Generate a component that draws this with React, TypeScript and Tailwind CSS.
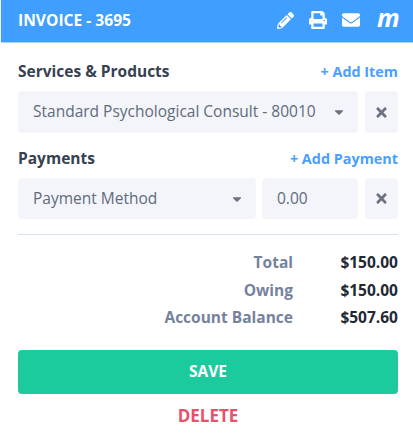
import { FaPencilAlt, FaPrint, FaEnvelope, FaTimes, FaCaretDown } from 'react-icons/fa';

const font = { fontFamily: '"Open Sans", sans-serif' };

function RemoveButton() {
  return (
    <button className="w-[33px] h-full shrink-0 bg-[#f3f5fa] rounded-[4px] flex items-center justify-center text-[#6b7280]">
      <FaTimes className="w-[15px] h-[15px]" />
    </button>
  );
}

function Select({ label, className }: { label: string; className: string }) {
  return (
    <div className={`${className} h-full bg-[#f3f5fa] rounded-[4px] flex items-center justify-between pl-[15px] pr-[12px] text-[15.5px] text-[#5f6b7c]`}>
      <span>{label}</span>
      <FaCaretDown className="w-[14px] h-[14px] text-[#6b7280]" />
    </div>
  );
}

function TotalRow({ label, value }: { label: string; value: string }) {
  return (
    <div className="flex justify-end items-center h-[27.5px] text-[15.5px] font-bold">
      <span className="text-[#76829b]">{label}</span>
      <span className="w-[105px] text-right text-[#1f2933]">{value}</span>
    </div>
  );
}

export default function App() {
  return (
    <div className="w-[413px] h-[438px] bg-white overflow-hidden" style={font}>
      <div className="ml-px h-[43px] bg-[#409eff] border-b border-[#a8d4fb] flex items-center justify-between pl-[17px] pr-[15px] text-white">
        <h1 className="text-[15.6px] font-bold">INVOICE - 3695</h1>
        <div className="flex items-center">
          <FaPencilAlt className="w-[17px] h-[17px] -mt-[2px]" />
          <FaPrint className="w-[18px] h-[18px] ml-[15px] -mt-[2px]" />
          <FaEnvelope className="w-[18px] h-[18px] ml-[15px] -mt-[2px]" />
          <span className="ml-[17px] w-[21px] text-[25px] leading-[20px] font-bold italic -mt-[8px]">m</span>
        </div>
      </div>

      <div className="pl-[18px] pr-[15px]">
        <div className="flex items-center justify-between mt-[18px] h-[22px]">
          <h2 className="text-[15.5px] font-bold text-[#364152]">Services &amp; Products</h2>
          <a className="text-[14.4px] font-bold text-[#4a9fff]">+ Add Item</a>
        </div>
        <div className="flex gap-[7px] h-[42px] mt-[8px]">
          <Select label="Standard Psychological Consult - 80010" className="flex-1" />
          <RemoveButton />
        </div>

        <div className="flex items-center justify-between mt-[15px] h-[22px]">
          <h2 className="text-[15.5px] font-bold text-[#364152]">Payments</h2>
          <a className="text-[14.4px] font-bold text-[#4a9fff]">+ Add Payment</a>
        </div>
        <div className="flex h-[41px] mt-[8px]">
          <Select label="Payment Method" className="w-[238px]" />
          <div className="w-[96px] ml-[6px] bg-[#f3f5fa] rounded-[4px] flex items-center pl-[15px] text-[15.5px] text-[#5f6b7c]">0.00</div>
          <div className="ml-[7px] h-full"><RemoveButton /></div>
        </div>

        <div className="mt-[15px] border-t border-[#d5e2ef]" />

        <div className="mt-[14px]">
          <TotalRow label="Total" value="$150.00" />
          <TotalRow label="Owing" value="$150.00" />
          <TotalRow label="Account Balance" value="$507.60" />
        </div>

        <button className="mt-[18px] w-full h-[44px] bg-[#1ccb9d] rounded-[4px] text-white text-[15.5px] font-bold">SAVE</button>
        <div className="mt-[9px] text-center text-[17px] font-bold text-[#ea4f6c]">DELETE</div>
      </div>
    </div>
  );
}
